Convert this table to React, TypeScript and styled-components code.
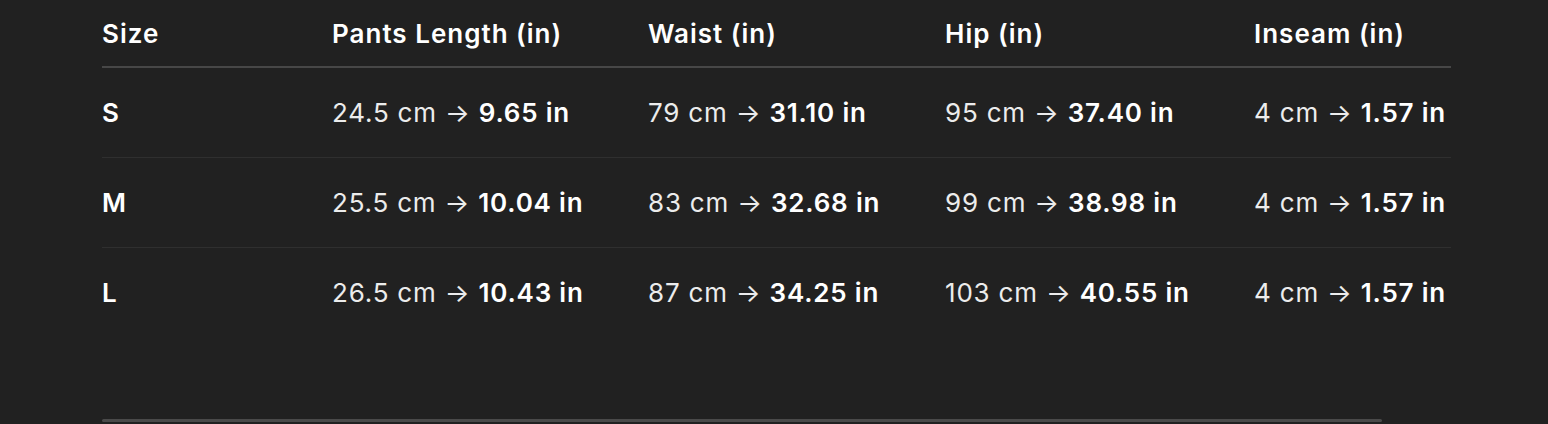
import React from "react";
import styled, { createGlobalStyle } from "styled-components";

const GlobalStyle = createGlobalStyle`
    html, body {
        margin : 0;
        padding : 0;
        background : #212121;
    }
    body {
        font-family : Inter, "Noto Sans", "Liberation Sans", sans-serif;
        color : #ececec;
    }
`

type Row = { size : string; cells : [string, string][] };

const headers = ["Size", "Pants Length (in)", "Waist (in)", "Hip (in)", "Inseam (in)"];

const rows : Row[] = [
    { size : "S", cells : [["24.5", "9.65"], ["79", "31.10"], ["95", "37.40"], ["4", "1.57"]] },
    { size : "M", cells : [["25.5", "10.04"], ["83", "32.68"], ["99", "38.98"], ["4", "1.57"]] },
    { size : "L", cells : [["26.5", "10.43"], ["87", "34.25"], ["103", "40.55"], ["4", "1.57"]] },
];

const App = () => {
    return (
        <>
            <GlobalStyle />
            <Page>
                <Table>
                    <HeadRow>
                        {headers.map((h) => <HeadCell key={h}>{h}</HeadCell>)}
                    </HeadRow>
                    {rows.map((r, i) => (
                        <BodyRow key={r.size} last={i === rows.length - 1}>
                            <SizeCell>{r.size}</SizeCell>
                            {r.cells.map(([cm, inch], j) => (
                                <Cell key={j}>
                                    {cm} cm → <Value>{inch} in</Value>
                                </Cell>
                            ))}
                        </BodyRow>
                    ))}
                </Table>
                <ScrollThumb />
            </Page>
        </>
    )
};

const Page = styled.div`
    width : 1548px;
    height : 424px;
    padding : 0 0 2px 102px;
    box-sizing : border-box;
    display : flex;
    flex-direction : column;
    justify-content : space-between;
`

const Table = styled.div`
    display : flex;
    flex-direction : column;
    width : 1349px;
    font-size : 26px;
    letter-spacing : 0.8px;
`

const HeadRow = styled.div`
    display : grid;
    grid-template-columns : 230px 316px 297px 309px 197px;
    align-items : center;
    height : 66px;
    border-bottom : 2px solid #474747;
`

const HeadCell = styled.div`
    font-weight : 600;
    color : #ffffff;
    white-space : nowrap;
    letter-spacing : 1px;
`

const BodyRow = styled.div<{ last? : boolean }>`
    display : grid;
    grid-template-columns : 230px 316px 297px 309px 197px;
    align-items : center;
    height : 89px;
    border-bottom : 1px solid ${p => p.last ? 'transparent' : '#2f2f2f'};
`

const Cell = styled.div`
    font-weight : 400;
    color : #ececec;
    white-space : nowrap;
`

const Value = styled.span`
    font-weight : 600;
    color : #ffffff;
`

const SizeCell = styled(Cell)`
    font-weight : 600;
    color : #ffffff;
`

const ScrollThumb = styled.div`
    width : 1280px;
    height : 3px;
    background : #4a4a4a;
    border-radius : 2px;
`

export default App;
